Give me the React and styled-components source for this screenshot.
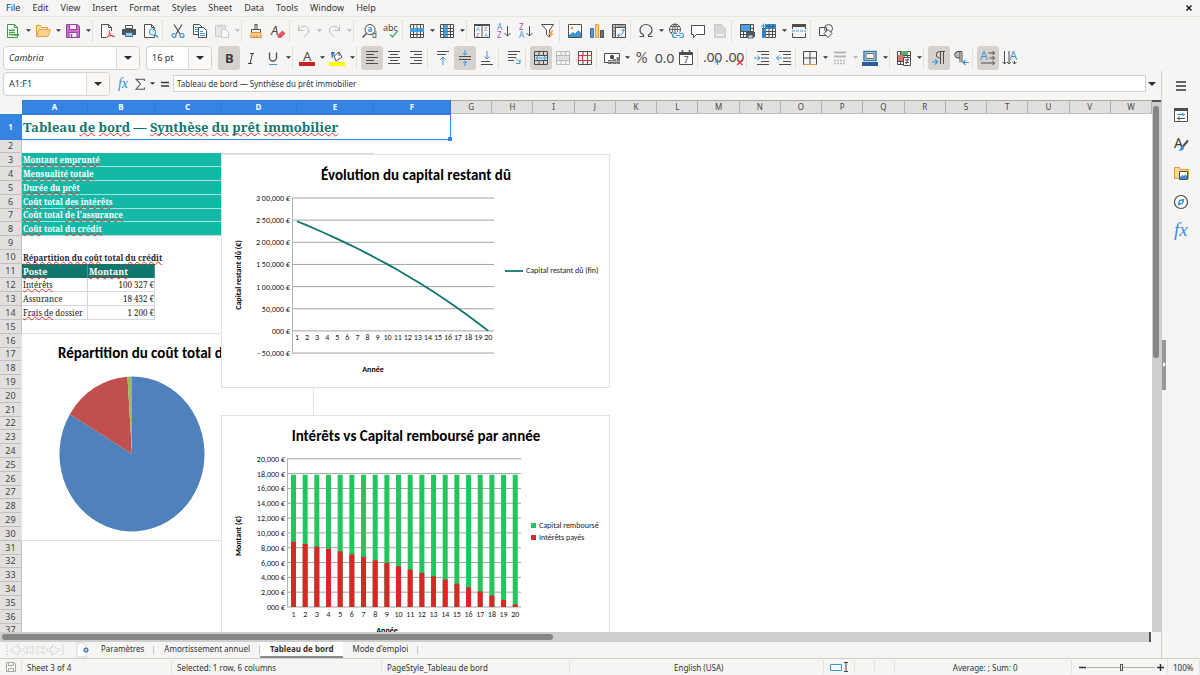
import React, { useState } from "react";
import styled, { createGlobalStyle, css } from "styled-components";

const GlobalStyle = createGlobalStyle`
  * {
    box-sizing: border-box;
  }

  body {
    margin: 0;
    background: #f6f5f3;
    color: #2e3436;
    font-family: "Noto Sans", "Open Sans", sans-serif;
    font-size: 9px;
  }

  button, input, select {
    margin: 0;
    padding: 0;
    border: none;
    background: none;
    color: inherit;
    font: inherit;
  }

  svg {
    display: block;
    flex: none;
    overflow: visible;
  }
`;

/* ---------- window ---------- */

const Window = styled.div`
  display: flex;
  flex-direction: column;
  height: 100vh;
  overflow: hidden;
`;

const MenuBar = styled.nav`
  display: flex;
  align-items: center;
  height: 17px;
  padding: 0 5px 0 0;
  border-bottom: 1px solid #e6e4e1;
`;

const MenuItem = styled.button`
  padding: 0 6px;
  line-height: 16px;
`;

const CloseButton = styled.button`
  margin-left: auto;
  width: 12px;
  height: 12px;
  display: grid;
  place-items: center;
`;

const Toolbar = styled.div`
  display: flex;
  align-items: center;
  height: 27px;
  padding-left: ${(p) => p.$inset || 2}px;
`;

const ToolButton = styled.button`
  display: grid;
  place-items: center;
  flex: none;
  width: ${(p) => p.$width || 22}px;
  height: 24px;
  border-radius: 3px;
  opacity: ${(p) => (p.disabled ? 0.35 : 1)};
  ${(p) =>
    p.$active &&
    css`
      background: #d5d1cd;
    `}
`;

const ArrowButton = styled.button`
  display: grid;
  place-items: center;
  flex: none;
  width: 8px;
  height: 24px;
  opacity: ${(p) => (p.disabled ? 0.35 : 1)};
`;

const Separator = styled.span`
  width: ${(p) => (p.$tight ? 4 : 5)}px;
  height: 22px;
  border-left: 1px solid #e3e1de;
`;

const Combo = styled.label`
  display: flex;
  flex: none;
  align-items: stretch;
  width: ${(p) => p.$width}px;
  height: 24px;
  margin-right: 6px;
  border: 1px solid #d3d0cc;
  border-radius: 4px;
  background: #fff;
  overflow: hidden;

  select, input {
    flex: 1;
    min-width: 0;
    padding-left: 5px;
    appearance: none;
    outline: none;
    font-style: ${(p) => (p.$italic ? "italic" : "normal")};
  }
`;

const ComboArrow = styled.span`
  display: grid;
  place-items: center;
  width: 23px;
  border-left: 1px solid #dedbd8;
  background: #f9f8f7;
`;

/* ---------- middle part ---------- */

const Middle = styled.div`
  display: flex;
  flex: 1;
  min-height: 0;
`;

const Document = styled.main`
  display: flex;
  flex-direction: column;
  flex: 1;
  min-width: 0;
`;

const FormulaBar = styled.div`
  display: flex;
  align-items: center;
  height: 29px;
  padding: 0 5px 4px 3px;
`;

const FormulaInput = styled.input`
  flex: 1;
  height: 17px;
  margin: 0 2px 0 0;
  padding: 0 3px;
  border: 1px solid #d5d2ce;
  background: #fff;
  font-size: 8px;
  outline: none;
`;

const SheetRow = styled.div`
  display: flex;
  flex: 1;
  min-height: 0;
`;

const Sheet = styled.div`
  position: relative;
  flex: 1;
  min-width: 0;
  overflow: hidden;
  background: #fff;
`;

const Grid = styled.table`
  width: 100%;
  table-layout: fixed;
  border-collapse: separate;
  border-spacing: 0;
  font-family: "Noto Serif", "DejaVu Serif Condensed", "DejaVu Serif", serif;
  font-size: 8px;
  color: #222;

  td, th {
    padding: 0;
    line-height: 12px;
    white-space: nowrap;
  }

  td {
    padding-left: 1px;
  }
`;

const SheetLine = styled.tr`
  height: ${(p) => p.$height || 14}px;
`;

const headerCell = css`
  border-right: 1px solid #c2c0bd;
  border-bottom: 1px solid #c2c0bd;
  background: #e1e0de;
  color: #444;
  font-family: "Noto Sans", sans-serif;
  font-weight: 400;
  text-align: center;
`;

const ColumnHead = styled.th`
  ${headerCell}
  border-top: 1px solid #aaa8a5;
  border-right-color: #b4b2b0;
  font-size: 8px;
  ${(p) =>
    p.$selected &&
    css`
      background: #3584e4;
      border-color: #2f78d2;
      color: #fff;
      font-weight: 700;
    `}
`;

const RowHead = styled.th`
  ${headerCell}
  font-size: 9px;
  ${(p) =>
    p.$selected &&
    css`
      background: #3584e4;
      border-color: #3584e4;
      color: #fff;
      font-weight: 700;
      font-size: 8px;
    `}
`;

const Corner = styled.th`
  background: #f6f5f3;
`;

const TitleCell = styled.td`
  position: relative;
  border: 1px solid #3584e4;
  border-left: none;
  color: #0f766e;
  font-size: 13px;
  font-weight: 700;

  &::after {
    content: "";
    position: absolute;
    right: -2px;
    bottom: -2px;
    width: 4px;
    height: 4px;
    background: #3584e4;
  }
`;

const LabelCell = styled.td`
  border-bottom: 1px solid #a5e3db;
  background: #14b8a6;
  color: #fff;
  font-weight: 700;
`;

const HeadingCell = styled.td`
  color: #1e293b;
  font-weight: 700;
  vertical-align: bottom;
`;

const TableHeadCell = styled.td`
  border-right: 1px solid #4b9690;
  background: #0f766e;
  color: #fff;
  font-size: 9px;
  font-weight: 700;
  vertical-align: bottom;
`;

const DataCell = styled.td`
  border-right: 1px solid #d5d8dc;
  border-bottom: 1px solid #d5d8dc;
  text-align: ${(p) => (p.$number ? "right" : "left")};
  vertical-align: bottom;
`;

const MergedEdge = styled.td`
  border-top: 1px solid #d5d8dc;
`;

const Misspelled = styled.span`
  text-decoration: underline wavy #e0322c 1px;
  text-decoration-skip-ink: none;
  text-underline-offset: 0px;
`;

const ChartFrame = styled.figure`
  position: absolute;
  left: ${(p) => p.$left}px;
  top: ${(p) => p.$top}px;
  margin: 0;
  border: 1px solid #e2e2e2;
  background: #fff;
  overflow: hidden;

  text {
    font-family: Carlito, Lato, sans-serif;
    font-size: 8px;
    fill: #1a1a1a;
  }

  text.title {
    font-size: 15px;
    font-weight: 700;
    fill: #000;
  }

  text.axis {
    font-weight: 700;
    fill: #000;
  }
`;

const VerticalTrack = styled.div`
  width: 9px;
  padding: 4px 2px 0 1px;
  border-top: 2px solid #555;
  background: #cecece;
`;

const VerticalThumb = styled.div`
  height: 48%;
  border-radius: 3px;
  background: #858585;
`;

const HorizontalTrack = styled.div`
  height: 10px;
  margin-right: 10px;
  padding: 2px 0 2px 2px;
  border-right: 2px solid #555;
  background: #cecece;
`;

const HorizontalThumb = styled.div`
  width: 48%;
  height: 6px;
  border-radius: 3px;
  background: #858585;
`;

const TabBar = styled.div`
  display: flex;
  align-items: stretch;
  height: 16px;
  font-size: 8px;
`;

const TabNav = styled.div`
  display: flex;
  align-items: center;
  width: 73px;
  padding-left: 5px;
  color: #c4c2bf;
`;

const TabNavButton = styled.button`
  width: 15px;
`;

const AddSheet = styled.button`
  display: grid;
  place-items: center;
  width: 18px;
`;

const SheetTab = styled.button`
  display: flex;
  align-items: center;
  padding: 0 9px 1px 10px;
  border-bottom: 2px solid transparent;

  ${(p) =>
    p.$active &&
    css`
      border-bottom-color: #8b8b8b;
      background: #fff;
      font-weight: 700;
    `}
`;

const TabDivider = styled.span`
  width: 1px;
  height: 8px;
  margin: 4px 0 0;
  background: #c4c2bf;
`;

/* ---------- sidebar ---------- */

const Sidebar = styled.aside`
  display: flex;
  width: 39px;
  border-left: 1px solid #d0cecb;
`;

const SidebarHandle = styled.button`
  align-self: center;
  display: grid;
  place-items: center;
  width: 4px;
  height: 50px;
  background: #979797;
`;

const SidebarDecks = styled.div`
  display: flex;
  flex-direction: column;
  align-items: center;
  gap: 5px;
  flex: 1;
  padding: 3px 4px 0 0;
`;

/* ---------- status bar ---------- */

const StatusBar = styled.footer`
  display: flex;
  align-items: center;
  height: 17px;
  border-top: 1px solid #d0cecb;
  font-size: 8px;
`;

const StatusField = styled.div`
  display: flex;
  align-items: center;
  justify-content: ${(p) => (p.$center ? "center" : "flex-start")};
  flex: ${(p) => p.$share || "none"};
  width: ${(p) => (p.$width ? `${p.$width}px` : "auto")};
  height: 14px;
  padding-left: 5px;
  border-right: 1px solid #e3e1de;
  white-space: nowrap;
`;

const ZoomButton = styled.button`
  display: grid;
  place-items: center;
  width: 10px;
  height: 12px;
`;

const ZoomSlider = styled.input`
  width: 68px;
  height: 12px;
  appearance: none;
  background: linear-gradient(#b4b2af, #b4b2af) center / 100% 1px no-repeat;

  &::-webkit-slider-thumb {
    appearance: none;
    width: 3px;
    height: 7px;
    border: 1px solid #555;
    background: #f6f5f3;
  }
`;

/* ---------- icons ---------- */

const dark = "#4d4d4d";
const blue = "#3a97d6";
const red = "#d9363e";

const line = (d, color = dark, width = 1) => (
  <path d={d} fill="none" stroke={color} strokeWidth={width} />
);

const glyph = (text, x, y, size, color = dark, extra = {}) => (
  <text x={x} y={y} fontSize={size} fill={color} fontFamily="Noto Sans, sans-serif" {...extra}>
    {text}
  </text>
);

const thin = { fontFamily: "Carlito, Lato, sans-serif", fontWeight: 300 };

const gridLines = "M1.5 1.5h13v13h-13zM1.5 5.5h13M1.5 8.5h13M1.5 11.5h13M4.5 1.5v13M8 1.5v13M11.5 1.5v13";

const icons = {
  newDoc: (
    <>
      <path d="M2.5 1.5h7l3 3v10h-10z" fill="#fff" stroke="#3a9b46" />
      <path d="M9.5 1.5v3h3" fill="none" stroke="#3a9b46" />
      <path d="M4 6.5h6v6H4z" fill="#4ba557" />
      {line("M4 8.5h6M4 10.5h6", "#c9ecce")}
      <path d="M10 11h4v2h-4z" fill="#4ba557" />
    </>
  ),
  open: (
    <>
      <path d="M1.5 13.5v-11h4l1 2h6v2" fill="#fbe0b4" stroke="#e09b3d" />
      <path d="M1.5 13.5l2.5-7h11.5l-2.5 7z" fill="#fcd394" stroke="#e8a44a" />
    </>
  ),
  save: (
    <>
      <path d="M1.5 1.5h11l2 2v11h-13z" fill="#c76fc9" stroke="#9c3fa3" />
      <path d="M4.5 1.5h7v5h-7zM4 9.5h8v5H4z" fill="#f5f0f5" stroke="#9c3fa3" />
      {line("M6.5 11v3", "#9c3fa3", 1.5)}
    </>
  ),
  pdf: (
    <>
      <path d="M2.5 1.5h7l3 3v10h-10z" fill="#fff" stroke={dark} />
      {line("M9.5 1.5v3h3")}
      <path d="M7 8h9v8H7z" fill="#f6f5f3" />
      {line("M7.5 14.5c3-2 3.500-4 3-7M10.500 9.500c1 3 2.500 4 5 4M7.500 14.500c2-2 5-2.500 8-1", red)}
    </>
  ),
  print: (
    <>
      <path d="M4.5 2.5h7v3h-7z" fill="#fff" stroke={dark} />
      <path d="M1 6h14v6H1z" fill="#4a5560" />
      <path d="M4.5 9.5h7v4h-7z" fill="#9dcbec" stroke="#3f6d91" />
    </>
  ),
  preview: (
    <>
      <path d="M1.5 1.5h7l3 3v10h-10z" fill="#fff" stroke={dark} />
      {line("M8.5 1.5v3h3")}
      <circle cx="9.5" cy="9" r="3.2" fill="#dff0fb" stroke={blue} />
      {line("M12 11.5l3 3", blue, 1.5)}
    </>
  ),
  cut: (
    <>
      {line("M4 1.5l6 9.5M12 1.5l-6 9.5", dark, 1.2)}
      <circle cx="4" cy="12.5" r="2" fill="none" stroke={blue} strokeWidth="1.2" />
      <circle cx="12" cy="12.5" r="2" fill="none" stroke={blue} strokeWidth="1.2" />
    </>
  ),
  copy: (
    <>
      <path d="M1.5 1.5h6l2 2v8h-8z" fill="#fff" stroke={dark} />
      <path d="M6.5 4.5h5l3 3v7h-8z" fill="#fff" stroke={dark} />
      {line("M3 4.5h3M3 6.5h3M3 8.5h3", blue)}
      {line("M8 8.5h3M8 10.5h5M8 12.5h5", blue)}
    </>
  ),
  paste: (
    <>
      <path d="M1.5 2.5h10v11h-10z" fill="#d0cfcd" stroke="#777" />
      <path d="M4 1.5h5v3H4z" fill="#999" />
      <path d="M7.5 6.5h4l3 3v5h-7z" fill="#fff" stroke="#777" />
    </>
  ),
  brush: (
    <>
      {line("M7 1.5h2v5H7zM3.5 6.5h9v3h-9z")}
      <path d="M3.5 9.5h9l1 5h-11z" fill="#f9cf93" stroke="#df8d30" />
      {line("M6 12v2.5M9 12v2.5", "#df8d30")}
    </>
  ),
  clear: (
    <>
      {glyph("A", 1, 12, 13, dark, { fontStyle: "italic" })}
      <path d="M7 12.5l5.5-5 3 3-4.5 4.500H8.500z" fill="#e25460" />
    </>
  ),
  undo: line("M2.5 2.5v5h5M3 7c2-4 6-5 8.5-2.5s1 6.5-3.5 9"),
  redo: line("M13.5 2.5v5h-5M13 7c-2-4-6-5-8.5-2.5s-1 6.5 3.5 9"),
  find: (
    <>
      <circle cx="9" cy="6.5" r="5" fill="#fff" stroke={dark} />
      {line("M5.5 10.5l-4 4", dark, 1.5)}
      {glyph("a", 6.5, 9, 8, blue, { fontWeight: 700 })}
      {glyph("d", 11, 15, 8)}
    </>
  ),
  spell: (
    <>
      {glyph("abc", 0, 8, 9)}
      {line("M7 11.5l2.5 2.5 5-6", "#3fae5a", 1.2)}
    </>
  ),
  rows: (
    <>
      {line(gridLines)}
      <path d="M1 5h14v4H1z" fill="#4aa3e0" />
      {line("M4.5 5v4M8 5v4M11.5 5v4", "#2f7fb8", 0.6)}
    </>
  ),
  cols: (
    <>
      {line(gridLines)}
      <path d="M4.5 2h4v12h-4z" fill="#4aa3e0" />
      {line("M4.5 5.5h4M4.5 8.5h4M4.5 11.5h4", "#2f7fb8", 0.6)}
    </>
  ),
  sort: (
    <>
      <path d="M.5 1.5h15v13H.5zM8 1.5v13" fill="#fff" stroke={dark} />
      <path d="M0 1h16v2H0z" fill={dark} />
      {glyph("A", 2, 8, 6, blue)}
      {glyph("Z", 2, 14, 6, "#a04fb5")}
      {glyph("Z", 10, 8, 6, "#a04fb5")}
      {glyph("A", 10, 14, 6, blue)}
    </>
  ),
  sortAsc: (
    <>
      {glyph("A", 1, 7, 8, blue)}
      {glyph("Z", 1, 15, 8, "#a04fb5")}
      {line("M11.5 3v10M8.5 10l3 3 3-3")}
    </>
  ),
  sortDesc: (
    <>
      {glyph("Z", 1, 7, 8, "#a04fb5")}
      {glyph("A", 1, 15, 8, blue)}
      {line("M11.5 3v10M8.5 10l3 3 3-3")}
    </>
  ),
  filter: (
    <>
      <path d="M1.5 1.5h12l-4 5.5v7l-3-2.5V7z" fill="#fff" stroke={dark} />
      <path d="M12 7l-4 4.5h2.5l-1.5 3.5 5-4.5h-2.5l2-3.5z" fill="#f2a54a" />
    </>
  ),
  image: (
    <>
      <path d="M1.5 1.5h13v13h-13z" fill="#fff" stroke={dark} />
      <circle cx="5" cy="5" r="1.5" fill="#f2a54a" />
      <path d="M2 12l4-3 2 1.5L11.5 7 14 10v4H2z" fill="#3f93d0" />
    </>
  ),
  chart: (
    <>
      <path d="M1.5 5.5h3v9h-3z" fill="#4d9fdc" stroke="#2c77b0" />
      <path d="M6.5 1.5h3v13h-3z" fill="#fbcf8e" stroke="#e39a3b" />
      <path d="M11.5 7.5h3v7h-3z" fill="#777" stroke={dark} />
    </>
  ),
  pivot: (
    <>
      {line("M1.5 1.5h13v13h-13zM1.5 4.5h13M4.5 1.5v13M8 1.5v3M11 1.5v3M1.5 8h3M1.5 11h3")}
      <path d="M2 2h12v2H2zM2 4h2v10H2z" fill="#999" opacity=".6" />
      {line("M6.500 12.500c4 0 6-2 6-6M10.500 8l2-2 2 2M8.500 10.500l-2 2 2 2", blue)}
    </>
  ),
  omega: line("M1.5 13.5h4v-1.500c-2-1-3.500-3-3.500-5a6 5.500 0 0 1 12 0c0 2-1.500 4-3.500 5v1.500h4", dark, 1.2),
  link: (
    <>
      <circle cx="7" cy="6.5" r="5.5" fill="none" stroke={dark} />
      {line("M1.5 6.5h11M7 1v11M3 3.5h8M3 9.5h5M7 1c-3.5 3-3.500 8 0 11M7 1c3.5 3 3.500 8 0 11", dark, 0.8)}
      <path d="M4 9.5h12v6H4z" fill="#f6f5f3" />
      {line("M9 10.500H6.500a2 2 0 0 0 0 4H9M11.500 10.500h2a2 2 0 0 1 0 4h-2M8 12.500h4.500", blue, 1.2)}
    </>
  ),
  comment: <path d="M1.5 2.5h13v9h-8l-3 3v-3h-2z" fill="#fff" stroke={dark} />,
  headerFooter: (
    <>
      <path d="M2.5 1.500h7l4 4v9h-11z" fill="#a5a5a5" stroke="#777" />
      <path d="M4 11h8v2H4z" fill="#eee" />
    </>
  ),
  printArea: (
    <>
      {line(gridLines)}
      <path d="M2 2h9v6H2z" fill="#4aa3e0" />
      <path d="M7 9h9v5H7z" fill="#4d5963" />
      <path d="M9 12h5v3H9z" fill="#b9d9f0" stroke={dark} strokeWidth=".8" />
    </>
  ),
  freeze: (
    <>
      {line(gridLines)}
      <path d="M4 1h11v5H4zM1 6h4v9H1z" fill="#3b8fd0" />
      {line("M5 3.5h9M8 1v5M12 1v5M1 9h4M1 12h4", "#1d5d92", 0.8)}
      <path d="M0 0h4v5H0z" fill="#f6f5f3" />
      {line("M0 3h5M2.500.5v5", blue)}
    </>
  ),
  split: (
    <>
      {line("M1.5 6V2.5h13V6M1.5 10v4.500h13V10")}
      <path d="M1 1h14v3H1z" fill={dark} />
      <path d="M1 8h14" stroke={blue} strokeDasharray="3 1" />
    </>
  ),
  shapes: (
    <>
      <circle cx="10.5" cy="5.5" r="4" fill="#f6f5f3" stroke={dark} />
      {line("M1.5 4.5h7v8h-7z")}
      <path d="M10 6.5l4 4-4 4-4-4z" fill="#f6f5f3" stroke={dark} />
    </>
  ),
  bold: glyph("B", 4, 13, 13, "#3b3b3b", { fontWeight: 700 }),
  italic: line("M7 3.500h4M5 13.500h4M9.500 3.500l-2.500 10", "#3b3b3b"),
  underline: (
    <>
      {line("M4.500 2.500v5a3.500 3.500 0 0 0 7 0v-5", dark, 1.3)}
      {line("M4 14.500h8", blue)}
    </>
  ),
  fontColor: (
    <>
      {glyph("A", 4, 11, 13)}
      <path d="M0 12h16v4H0z" fill="#c9211e" />
    </>
  ),
  highlight: (
    <>
      <path d="M5 6l5-4 3 5-6 4z" fill="#fff" stroke={dark} />
      {line("M10 2v4")}
      <path d="M2 2h4L3 9z" fill="#2d7cba" />
      <path d="M0 12h16v4H0z" fill="#ffff00" />
    </>
  ),
  left: line("M2 1.500h12M2 4.500h8M2 7.500h12M2 10.500h8M2 13.500h12"),
  center: line("M2 1.500h12M4 4.500h8M2 7.500h12M4 10.500h8M2 13.500h12"),
  right: line("M2 1.500h12M6 4.500h8M2 7.500h12M6 10.500h8M2 13.500h12"),
  top: (
    <>
      {line("M2 1.5h12M2 4.5h9")}
      {line("M8 15V7M5.5 9.5L8 7l2.5 2.5", blue)}
    </>
  ),
  middle: (
    <>
      {line("M2 6.5h12M2 9.5h12")}
      {line("M8 0v5M6 3l2 2 2-2M8 16v-5M6 13l2-2 2 2", blue)}
    </>
  ),
  bottom: (
    <>
      {line("M2 11.5h9M2 14.5h12")}
      {line("M8 1v8M5.5 6.5L8 9l2.5-2.5", blue)}
    </>
  ),
  wrap: (
    <>
      {line("M2 1.500h12M2 4.500h9M2 7.500h8M2 10.500h6")}
      {line("M9 7.500l5 5M14 9.500v4h-4", blue)}
    </>
  ),
  merge: (
    <>
      {line("M1.5 1.5h13v13h-13zM1.5 5.5h13M1.5 10.5h13M6 1.5v4M10.5 1.5v4M6 10.5v4M10.5 10.5v4")}
      <path d="M2 6h12v4H2z" fill="#d7ecfa" />
      {line("M2.5 8h11M5 6L3 8l2 2M11 6l2 2-2 2", blue)}
    </>
  ),
  mergeCells: (
    <>
      <path d="M2 6h12v5H2z" fill="#bbb" />
      {line("M1.5 1.5h13v13h-13zM1.5 5.5h13M1.5 10.5h13M6 1.5v4M10.5 1.5v4M6 10.5v4M10.5 10.5v4")}
    </>
  ),
  splitCells: (
    <>
      {line("M1.5 1.5h13v13h-13zM6 1.5v4M10.5 1.5v4M6 10.5v4M10.5 10.5v4")}
      {line("M1 5.5h14M1 10.5h14M5.5 5.5v5M10.5 5.5v5M1.5 5.5v5M14.5 5.5v5", red)}
    </>
  ),
  currency: (
    <>
      <path d="M.5 3.5h15v9H.5z" fill="#fff" stroke={dark} />
      <circle cx="8" cy="7" r="2.2" fill={dark} />
      <path d="M4 10h4v4H4zM8.500 9h3.500v5H8.500zM12.500 7H16v7h-3.500z" fill="#777" />
      {line("M4 11.5h12", "#ddd", 0.6)}
    </>
  ),
  percent: glyph("%", 2, 13, 16, dark, thin),
  number: glyph("0.0", -1, 13, 15, dark, thin),
  date: (
    <>
      <path d="M1.5 2.5h13v12h-13z" fill="#fff" stroke={dark} />
      <path d="M1 2h14v3H1z" fill={dark} />
      {line("M4.5 0v3M11.5 0v3", dark, 1.5)}
      {glyph("7", 5.5, 13, 9)}
    </>
  ),
  addDecimal: (
    <>
      {glyph(".00", -2, 12, 15, dark, thin)}
      {line("M12.500 9v6M9.500 12h6", blue, 1.2)}
    </>
  ),
  removeDecimal: (
    <>
      {glyph(".00", -2, 12, 15, dark, thin)}
      {line("M10 9.500l5.500 5.500M15.500 9.500L10 15", red, 1.2)}
    </>
  ),
  indent: (
    <>
      {line("M3 1.5h12M7 4.5h8M7 8h8M7 11.5h8M3 14.5h12")}
      {line("M0 8h5.5M3.5 5.5L6 8l-2.5 2.5", blue)}
    </>
  ),
  outdent: (
    <>
      {line("M3 1.5h12M7 4.5h8M7 8h8M7 11.5h8M3 14.5h12")}
      {line("M.5 8H6M3 5.5L.5 8 3 10.5", blue)}
    </>
  ),
  borders: (
    <>
      {line("M1.5 1.5h13v13h-13zM8 1.5v13M1.5 8h13")}
      {line("M1.5 14.5h13", "#e39a3b")}
    </>
  ),
  borderStyle: (
    <>
      {line("M2 2.5h12", dark, 2)}
      {line("M2 6.5h12", dark, 2)}
      <path d="M2 10.5h12M2 13.5h12" stroke={dark} strokeWidth="1.5" strokeDasharray="2 1" />
    </>
  ),
  borderColor: (
    <>
      <path d="M2 1.500h12v9H2z" fill="#cfe6f7" stroke="#3b79ad" strokeWidth="1.5" />
      <path d="M4 3.500h8v5H4z" fill="#f6f5f3" stroke={dark} strokeWidth=".8" />
      <path d="M0 12h16v4H0z" fill="#2a6099" />
    </>
  ),
  conditional: (
    <>
      {line(gridLines)}
      <path d="M5 1h7v4H5z" fill="#57b36a" />
      <path d="M2 5h5v6H2z" fill="#e46f6f" />
      <path d="M7.5 7.5h7v8h-7z" fill="#fff" stroke={dark} />
      {line("M9 10h4M9 12.5h4M12 8.5l-2 5.500")}
    </>
  ),
  ltr: (
    <>
      {line("M14 1.5H8.5a3 3 0 0 0 0 6.5H9M9.5 1.5v12.5M12.5 1.5v12.5")}
      {line("M1 12h5M4 9.5L6.5 12 4 14.5", blue, 1.2)}
    </>
  ),
  rtl: (
    <>
      <path d="M7 1.5H5a3 3 0 0 0 0 6.5h2z" fill="#bbb" />
      {line("M9 1.5H5a3 3 0 0 0 0 6.5h2M7 1.5v11M9 1.5v11")}
      {line("M10 12.5h6M12.5 10L10 12.5l2.5 2.5", blue, 1.2)}
    </>
  ),
  textHorizontal: (
    <>
      {glyph("A", 0, 10, 12, blue)}
      {line("M8.5 3h6M12.5 1l2 2-2 2M9.5 8h5M12.5 6l2 2-2 2M1 13h13.5M12.5 11l2 2-2 2")}
    </>
  ),
  textVertical: (
    <>
      {glyph("A", 7.5, 10, 12, blue)}
      {line("M2.500 1v13M.5 12l2 2 2-2M7 1v13M5 12l2 2 2-2M12.500 11v3M10.500 12l2 2 2-2")}
    </>
  ),
  fx: glyph("fx", 1, 12, 16, "#3a8fd6", { fontStyle: "italic", fontFamily: "Liberation Serif, serif" }),
  sum: line("M13 4.5v-2H3.5l5 5.500-5 6H13v-2", dark, 1.2),
  equals: line("M4 6.5h8M4 10h8", "#3b3b3b", 1.5),
  hamburger: line("M3 4h10M3 8h10M3 12h10", "#333", 1.5),
  properties: (
    <>
      <path d="M1.5 1.5h13v13h-13z" fill="#fff" stroke={dark} />
      <path d="M1 1h14v3H1z" fill={dark} />
      {line("M4 7.5h8M10 5.5v4", blue)}
      {line("M4 11.5h8M6 9.5v4")}
    </>
  ),
  styles: (
    <>
      {glyph("A", 1, 12, 14, "#3b3b3b")}
      {line("M15 4.500l-5 6", dark, 2)}
      <path d="M5 15c4 0 6-1 6-3.500L9.500 10C7 10.500 8 13.500 5 15z" fill="#3a8fd6" />
    </>
  ),
  gallery: (
    <>
      <path d="M1.5 13.5v-11h5l1 2h8v9z" fill="#fbd59b" stroke="#e39a3b" />
      <path d="M6.5 6.5h8v8h-8z" fill="#fff" stroke={dark} />
      <path d="M7 12l2.5-2 1.5 1 1.5-1.5L14 11v3H7z" fill="#3a8fd6" />
    </>
  ),
  navigator: (
    <>
      <circle cx="8" cy="8" r="6.5" fill="#fff" stroke={dark} strokeWidth="1.2" />
      <path d="M11.5 4.5l-1.500 5.500-5.500 1.500L6 6z" fill="#3a8fd6" />
      <circle cx="8" cy="8" r="1.2" fill="#fff" />
    </>
  ),
  functions: glyph("fx", 1, 13, 19, "#3a8fd6", { fontStyle: "italic", fontFamily: "Liberation Serif, serif" }),
};

const Icon = ({ name, size = 16 }) => (
  <svg width={size} height={size} viewBox="0 0 16 16" aria-hidden="true">
    {icons[name]}
  </svg>
);

const Caret = ({ wide }) => (
  <svg width={wide ? 8 : 5} height={wide ? 4 : 3} viewBox="0 0 8 4" aria-hidden="true">
    <path d="M0 0h8L4 4z" fill="#2e2e2e" />
  </svg>
);

/* Every tool is [icon, label, options]; a string stands for a separator. */
const standardTools = [
  ["newDoc", "New", { menu: true }],
  ["open", "Open", { menu: true }],
  ["save", "Save", { menu: true }],
  "tight",
  ["pdf", "Export as PDF"],
  ["print", "Print"],
  ["preview", "Print Preview"],
  "sep",
  ["cut", "Cut"],
  ["copy", "Copy"],
  ["paste", "Paste", { menu: true, disabled: true }],
  "tight",
  ["brush", "Clone Formatting"],
  ["clear", "Clear Formatting"],
  "tight",
  ["undo", "Undo", { menu: true, disabled: true }],
  ["redo", "Redo", { menu: true, disabled: true }],
  "sep",
  ["find", "Find and Replace"],
  ["spell", "Spelling"],
  "tight",
  ["rows", "Row", { menu: true }],
  ["cols", "Column", { menu: true }],
  "sep",
  ["sort", "Sort"],
  ["sortAsc", "Sort Ascending"],
  ["sortDesc", "Sort Descending"],
  ["filter", "AutoFilter"],
  "sep",
  ["image", "Insert Image"],
  ["chart", "Insert Chart"],
  ["pivot", "Pivot Table"],
  "sep",
  ["omega", "Special Character", { menu: true }],
  ["link", "Insert Hyperlink"],
  ["comment", "Insert Comment"],
  ["headerFooter", "Headers and Footers", { disabled: true }],
  "sep",
  ["printArea", "Define Print Area"],
  ["freeze", "Freeze Rows and Columns", { menu: true }],
  ["split", "Split Window"],
  "sep",
  ["shapes", "Show Draw Functions"],
];

const formattingTools = [
  ["bold", "Bold", { active: true }],
  ["italic", "Italic"],
  ["underline", "Underline", { menu: true }],
  "tight",
  ["fontColor", "Font Color", { menu: true }],
  ["highlight", "Background Color", { menu: true }],
  "sep",
  ["left", "Align Left", { active: true }],
  ["center", "Center Horizontally"],
  ["right", "Align Right"],
  "sep",
  ["top", "Align Top"],
  ["middle", "Center Vertically", { active: true }],
  ["bottom", "Align Bottom"],
  "sep",
  ["wrap", "Wrap Text"],
  "sep",
  ["merge", "Merge and Center Cells", { active: true }],
  ["mergeCells", "Merge Cells", { disabled: true }],
  ["splitCells", "Split Cells"],
  "sep",
  ["currency", "Format as Currency", { menu: true }],
  ["percent", "Format as Percent"],
  ["number", "Format as Number"],
  ["date", "Format as Date"],
  "sep",
  ["addDecimal", "Add Decimal Place"],
  ["removeDecimal", "Delete Decimal Place"],
  "sep",
  ["indent", "Increase Indent"],
  ["outdent", "Decrease Indent"],
  "tight",
  ["borders", "Borders", { menu: true }],
  ["borderStyle", "Border Style", { menu: true, disabled: true }],
  ["borderColor", "Border Color", { menu: true }],
  "tight",
  ["conditional", "Conditional Formatting", { menu: true }],
  "sep",
  ["ltr", "Left-To-Right", { active: true }],
  ["rtl", "Right-To-Left"],
  "sep",
  ["textHorizontal", "Text direction from left to right", { active: true }],
  ["textVertical", "Text direction from top to bottom"],
];

const Tools = ({ items }) =>
  items.map((item, i) => {
    if (typeof item === "string") return <Separator key={i} $tight={item === "tight"} />;
    const [name, label, { menu, active, disabled } = {}] = item;
    return (
      <React.Fragment key={name}>
        <ToolButton type="button" aria-label={label} $active={active} disabled={disabled}>
          <Icon name={name} />
        </ToolButton>
        {menu && (
          <ArrowButton type="button" aria-label={`${label} options`} disabled={disabled}>
            <Caret />
          </ArrowButton>
        )}
      </React.Fragment>
    );
  });

/* ---------- sheet content ---------- */

const columns = "ABCDEFGHIJKLMNOPQRSTUVW".split("");
const columnWidths = [66, 67, 66, 76, 77, 77];

/* Words between underscores get the spell checker's wavy line. */
const Spelled = ({ text }) =>
  text.split("_").map((part, i) => (i % 2 ? <Misspelled key={i}>{part}</Misspelled> : part));

const summary = {
  3: "_Montant emprunté_",
  4: "_Mensualité totale_",
  5: "_Durée du prêt_",
  6: "_Coût_ total _des intérêts_",
  7: "_Coût_ total _de l'assurance_",
  8: "_Coût_ total _du crédit_",
};

const costs = {
  12: ["_Intérêts_", "100 327 €"],
  13: ["Assurance", "18 432 €"],
  14: ["_Frais de_ dossier", "1 200 €"],
};

const rowCells = (n) => {
  if (summary[n]) {
    return (
      <>
        <LabelCell colSpan={3}><Spelled text={summary[n]} /></LabelCell>
        {n === 3 && <MergedEdge colSpan={2} />}
      </>
    );
  }
  if (n === 10) {
    return <HeadingCell colSpan={3}><Spelled text="_Répartition du coût_ total _du crédit_" /></HeadingCell>;
  }
  if (n === 11) {
    return (
      <>
        <TableHeadCell><Spelled text="_Poste_" /></TableHeadCell>
        <TableHeadCell><Spelled text="_Montant_" /></TableHeadCell>
      </>
    );
  }
  if (costs[n]) {
    return (
      <>
        <DataCell><Spelled text={costs[n][0]} /></DataCell>
        <DataCell $number>{costs[n][1]}</DataCell>
      </>
    );
  }
  return null;
};

const rowNumbers = Array.from({ length: 36 }, (_, i) => i + 2);

const Spreadsheet = () => (
  <Grid>
    <colgroup>
      <col style={{ width: 22 }} />
      {columns.map((c, i) => (
        <col key={c} style={{ width: columnWidths[i] }} />
      ))}
    </colgroup>
    <thead>
      <SheetLine>
        <Corner />
        {columns.map((c, i) => (
          <ColumnHead key={c} scope="col" $selected={i < 6}>{c}</ColumnHead>
        ))}
      </SheetLine>
    </thead>
    <tbody>
      <SheetLine $height={26}>
        <RowHead scope="row" $selected>1</RowHead>
        <TitleCell colSpan={6}>
          <Spelled text="Tableau _de_ _bord_ — _Synthèse_ _du_ _prêt_ _immobilier_" />
        </TitleCell>
      </SheetLine>
      {rowNumbers.map((n) => (
        <SheetLine key={n} $height={n % 5 === 2 && n !== 12 ? 13 : 14}>
          <RowHead scope="row">{n}</RowHead>
          {rowCells(n)}
        </SheetLine>
      ))}
    </tbody>
  </Grid>
);

/* ---------- charts ---------- */

const years = Array.from({ length: 20 }, (_, i) => i + 1);

const polar = (share, rx, ry) => {
  const angle = share * 2 * Math.PI;
  return `${Math.sin(angle) * rx} ${-Math.cos(angle) * ry}`;
};

const Slice = ({ from, to, fill }) => (
  <path
    d={`M0 0L${polar(from, 72.5, 77.5)}A72.5 77.5 0 ${to - from > 0.5 ? 1 : 0} 1 ${polar(to, 72.5, 77.5)}z`}
    fill={fill}
  />
);

const PieChart = () => (
  <svg width="291" height="206" role="img" aria-label="Répartition du coût total du crédit">
    <text className="title" x="36" y="24">Répartition du coût total du crédit</text>
    <g transform="translate(110 120)">
      <Slice from={0} to={0.836} fill="#4f81bd" />
      <Slice from={0.836} to={0.99} fill="#c0504d" />
      <Slice from={0.99} to={1} fill="#9bbb59" />
    </g>
  </svg>
);

const balanceLabels = ["3 00,000 €", "2 50,000 €", "2 00,000 €", "1 50,000 €", "1 00,000 €", "50,000 €", "000 €", "- 50,000 €"];
const growth = 1.035;
const balances = years.map((n) => (256.5 * (growth ** 20 - growth ** n)) / (growth ** 20 - 1));

const BalanceChart = () => {
  const x = (n) => 75 + (n - 1) * 10.07;
  const y = (i) => 43 + i * 22.15;
  const points = balances.map((b, i) => `${x(i + 1)},${y(6) - (b / 50) * 22.15}`).join(" ");
  return (
    <svg width="387" height="232" role="img" aria-label="Évolution du capital restant dû">
      <text className="title" x="194" y="25" textAnchor="middle">Évolution du capital restant dû</text>
      {balanceLabels.map((label, i) => (
        <g key={label}>
          <path d={`M70 ${y(i)}h202`} stroke="#a3a3a3" />
          <text x="68" y={y(i) + 3} textAnchor="end">{label}</text>
        </g>
      ))}
      <path d={`M70.5 ${y(0)}V${y(7)}`} stroke="#b3b3b3" />
      {years.map((n) => (
        <text key={n} x={x(n)} y="185" textAnchor="middle">{n}</text>
      ))}
      <polyline points={points} fill="none" stroke="#0f766e" strokeWidth="1.8" />
      <text className="axis" x="151" y="217" textAnchor="middle">Année</text>
      <text className="axis" transform="translate(19 120) rotate(-90)" textAnchor="middle">Capital restant dû (€)</text>
      <path d="M283 116h18" stroke="#0f766e" strokeWidth="1.8" />
      <text x="304" y="118">Capital restant dû (fin)</text>
    </svg>
  );
};

const interests = [8.8, 8.5, 8.15, 7.85, 7.5, 7.1, 6.75, 6.3, 5.95, 5.5, 5.05, 4.6, 4.15, 3.7, 3.15, 2.65, 2.1, 1.55, 0.95, 0.35];
const yearly = 17.84;
const amountLabels = ["20,000 €", "18,000 €", "16,000 €", "14,000 €", "12,000 €", "10,000 €", "8,000 €", "6,000 €", "4,000 €", "2,000 €", "000 €"];

const InterestChart = () => {
  const x = (n) => 71.5 + (n - 1) * 11.67;
  const y = (amount) => 191 - amount * 7.41;
  return (
    <svg width="387" height="232" role="img" aria-label="Intérêts vs Capital remboursé par année">
      <text className="title" x="194" y="25" textAnchor="middle">Intérêts vs Capital remboursé par année</text>
      {amountLabels.map((label, i) => (
        <g key={label}>
          <path d={`M65 ${y(20 - i * 2)}h234`} stroke="#a3a3a3" />
          <text x="63" y={y(20 - i * 2) + 3} textAnchor="end">{label}</text>
        </g>
      ))}
      <path d={`M65.5 ${y(20)}V${y(0)}`} stroke="#b3b3b3" />
      {years.map((n, i) => (
        <g key={n}>
          <rect x={x(n) - 2.5} y={y(yearly)} width="5" height={yearly * 7.41} fill="#22c55e" />
          <rect x={x(n) - 2.5} y={y(interests[i])} width="5" height={interests[i] * 7.41} fill="#dc2626" />
          <text x={x(n)} y="201" textAnchor="middle">{n}</text>
        </g>
      ))}
      <text className="axis" x="165" y="217" textAnchor="middle">Année</text>
      <text className="axis" transform="translate(19 120) rotate(-90)" textAnchor="middle">Montant (€)</text>
      <path d="M309 107h5v5h-5z" fill="#22c55e" />
      <text x="317" y="112">Capital remboursé</text>
      <path d="M309 119h5v5h-5z" fill="#dc2626" />
      <text x="317" y="124">Intérêts payés</text>
    </svg>
  );
};

/* ---------- page ---------- */

const menus = ["File", "Edit", "View", "Insert", "Format", "Styles", "Sheet", "Data", "Tools", "Window", "Help"];
const sheets = ["Paramètres", "Amortissement annuel", "Tableau de bord", "Mode d'emploi"];
const decks = ["properties", "styles", "gallery", "navigator", "functions"];
const tabArrows = [
  "M2 0v12M13 1L5 6l8 5V8h2V4h-2z",
  "M7 2L2 6l5 4V7l6 3V2L7 5z",
  "M8 2l5 4-5 4V7l-6 3V2l6 3z",
  "M13 0v12M2 1l8 5-8 5V8H0V4h2z",
];

export default function App() {
  const [activeSheet, setActiveSheet] = useState("Tableau de bord");
  const [formula, setFormula] = useState("Tableau de bord — Synthèse du prêt immobilier");
  const [zoom, setZoom] = useState(100);

  return (
    <Window>
      <GlobalStyle />

      <MenuBar>
        {menus.map((m) => (
          <MenuItem key={m} type="button">{m}</MenuItem>
        ))}
        <CloseButton type="button" aria-label="Close document">
          <svg width="6" height="6" viewBox="0 0 6 6">
            <path d="M.5.5l5 5M5.5.5l-5 5" stroke="#222" strokeWidth="1.6" />
          </svg>
        </CloseButton>
      </MenuBar>

      <Toolbar>
        <Tools items={standardTools} />
      </Toolbar>

      <Toolbar $inset={3}>
        <Combo $width={137} $italic>
          <select aria-label="Font Name" defaultValue="Cambria">
            <option>Cambria</option>
          </select>
          <ComboArrow><Caret wide /></ComboArrow>
        </Combo>
        <Combo $width={66}>
          <select aria-label="Font Size" defaultValue="16 pt">
            <option>16 pt</option>
          </select>
          <ComboArrow><Caret wide /></ComboArrow>
        </Combo>
        <Tools items={formattingTools} />
      </Toolbar>

      <Middle>
        <Document>
          <FormulaBar>
            <Combo $width={107}>
              <input aria-label="Name Box" defaultValue="A1:F1" />
              <ComboArrow as="button" type="button" aria-label="Named ranges"><Caret wide /></ComboArrow>
            </Combo>
            <ToolButton type="button" aria-label="Function Wizard" $width={16}><Icon name="fx" size={14} /></ToolButton>
            <ToolButton type="button" aria-label="Select Function" $width={16}><Icon name="sum" size={14} /></ToolButton>
            <ArrowButton type="button" aria-label="Select Function options"><Caret /></ArrowButton>
            <ToolButton type="button" aria-label="Formula" $width={17}><Icon name="equals" /></ToolButton>
            <FormulaInput aria-label="Input line" value={formula} onChange={(e) => setFormula(e.target.value)} />
            <ArrowButton type="button" aria-label="Expand Formula Bar"><Caret wide /></ArrowButton>
          </FormulaBar>

          <SheetRow>
            <Sheet>
              <Spreadsheet />
              <ChartFrame $left={21} $top={233}><PieChart /></ChartFrame>
              <ChartFrame $left={221} $top={54}><BalanceChart /></ChartFrame>
              <ChartFrame $left={221} $top={315}><InterestChart /></ChartFrame>
            </Sheet>
            <VerticalTrack><VerticalThumb /></VerticalTrack>
          </SheetRow>
          <HorizontalTrack><HorizontalThumb /></HorizontalTrack>

          <TabBar>
            <TabNav>
              {tabArrows.map((d, i) => (
                <TabNavButton key={d} type="button" aria-label={["First", "Previous", "Next", "Last"][i] + " sheet"}>
                  <svg width="15" height="12" viewBox="0 0 15 12">
                    <path d={d} fill="none" stroke="currentColor" strokeWidth=".8" strokeDasharray="2 1" />
                  </svg>
                </TabNavButton>
              ))}
            </TabNav>
            <AddSheet type="button" aria-label="Add Sheet">
              <svg width="14" height="14" viewBox="0 0 14 14">
                <path d="M2 0h6l3 3v11H2z" fill="#fff" stroke="#ccc" strokeWidth=".8" />
                <circle cx="11" cy="7" r="2.5" fill="#2d6db8" />
                <path d="M11 5.500v3M9.500 7h3" stroke="#fff" strokeWidth=".8" />
              </svg>
            </AddSheet>
            {sheets.map((name) => (
              <React.Fragment key={name}>
                <SheetTab type="button" $active={name === activeSheet} onClick={() => setActiveSheet(name)}>
                  {name}
                </SheetTab>
                {name !== activeSheet && <TabDivider />}
              </React.Fragment>
            ))}
          </TabBar>
        </Document>

        <Sidebar>
          <SidebarHandle type="button" aria-label="Hide sidebar">
            <svg width="3" height="5" viewBox="0 0 3 5"><path d="M0 0l3 2.500L0 5z" fill="#fff" /></svg>
          </SidebarHandle>
          <SidebarDecks>
            <ToolButton type="button" aria-label="Sidebar Settings"><Icon name="hamburger" /></ToolButton>
            {decks.map((d) => (
              <ToolButton key={d} type="button" aria-label={d}><Icon name={d} /></ToolButton>
            ))}
          </SidebarDecks>
        </Sidebar>
      </Middle>

      <StatusBar>
        <StatusField $width={22}>
          <svg width="12" height="12" viewBox="0 0 12 12">
            <path d="M1.5 1.5h8l1 1v8h-9zM3.5 1.5h5v3h-5zM3.5 7.5h5v3h-5z" fill="none" stroke="#a9a7a4" />
          </svg>
        </StatusField>
        <StatusField $width={150}>Sheet 3 of 4</StatusField>
        <StatusField $width={210}>Selected: 1 row, 6 columns</StatusField>
        <StatusField $width={188}>PageStyle_Tableau de bord</StatusField>
        <StatusField $share="254" $center>English (USA)</StatusField>
        <StatusField $width={31}>
          <svg width="22" height="12" viewBox="0 0 22 12">
            <path d="M1.5 3.5h11v6h-11z" fill="#fff" stroke={blue} />
            <path d="M15 1.5h4M15 10.5h4M17 1.5v9" stroke="#444" />
          </svg>
        </StatusField>
        <StatusField $width={20} />
        <StatusField $width={20} />
        <StatusField $share="176" $center>Average: ; Sum: 0</StatusField>
        <StatusField $width={96}>
          <ZoomButton type="button" aria-label="Zoom out">
            <svg width="7" height="7" viewBox="0 0 7 7"><path d="M0 3.500h7" stroke="#333" strokeWidth="1.5" /></svg>
          </ZoomButton>
          <ZoomSlider
            type="range"
            aria-label="Zoom"
            min="20"
            max="180"
            value={zoom}
            onChange={(e) => setZoom(Number(e.target.value))}
          />
          <ZoomButton type="button" aria-label="Zoom in">
            <svg width="7" height="7" viewBox="0 0 7 7"><path d="M0 3.500h7M3.500 0v7" stroke="#333" strokeWidth="1.5" /></svg>
          </ZoomButton>
        </StatusField>
        <StatusField $width={32}>{zoom}%</StatusField>
      </StatusBar>
    </Window>
  );
}
